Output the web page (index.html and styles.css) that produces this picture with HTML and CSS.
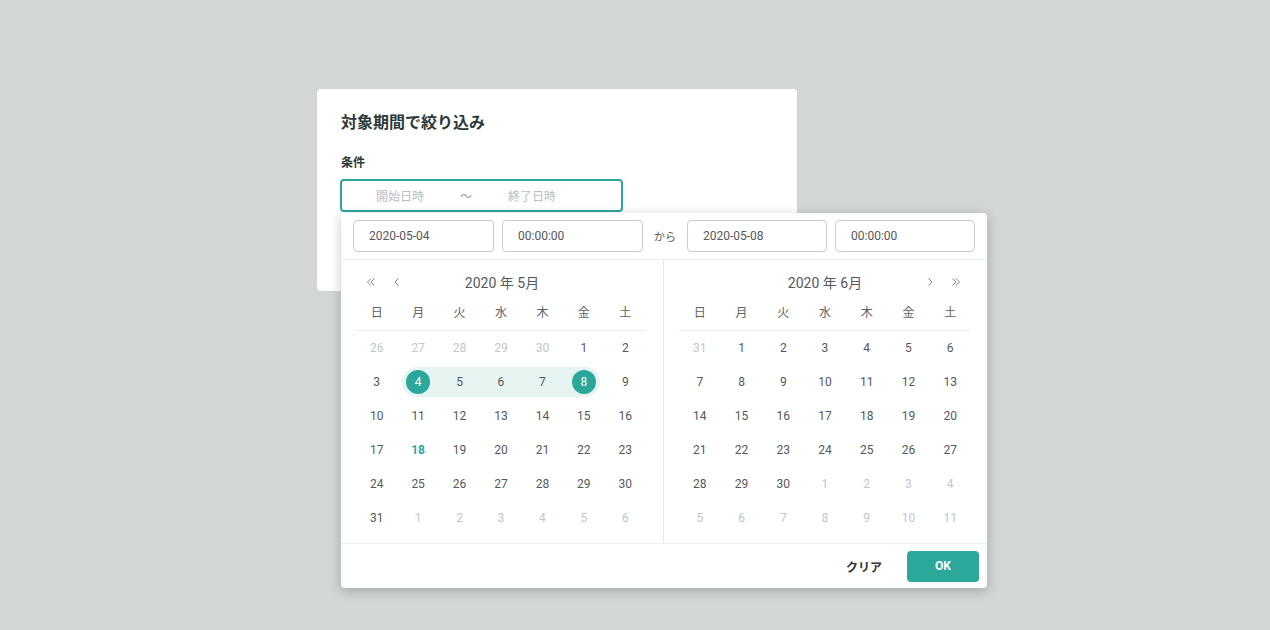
FILE: index.html
```html
<!DOCTYPE html>
<html lang="ja">
<head>
<meta charset="utf-8">
<link rel="stylesheet" href="styles.css">
</head>
<body>
<div class="dialog">
  <h2 class="title">対象期間で絞り込み</h2>
  <div class="label">条件</div>
  <div class="range-input">
    <span class="ph">開始日時</span>
    <span class="sep">〜</span>
    <span class="ph">終了日時</span>
  </div>

  <div class="picker">
    <div class="picker-head">
      <div class="field f-date">2020-05-04</div>
      <div class="field f-time">00:00:00</div>
      <div class="kara">から</div>
      <div class="field f-date2">2020-05-08</div>
      <div class="field f-time2">00:00:00</div>
    </div>
    <div class="panels">
      <div class="panel left">
        <div class="cal-head">
          <div class="navs">
            <svg class="ic" width="10" height="10" viewBox="0 0 10 10"><path d="M5 1.5L1.5 5 5 8.5M8.5 1.5L5 5 8.5 8.5" fill="none" stroke="#7d8086" stroke-width="1"/></svg>
            <svg class="ic ic2" width="10" height="10" viewBox="0 0 10 10"><path d="M6.5 1.5L3 5 6.5 8.5" fill="none" stroke="#7d8086" stroke-width="1"/></svg>
          </div>
          <div class="cal-title">2020 年 5月</div>
          <div class="navs"></div>
        </div>
        <div class="week"><span>日</span><span>月</span><span>火</span><span>水</span><span>木</span><span>金</span><span>土</span></div>
        <div class="days">
          <div class="d g"><span>26</span></div><div class="d g"><span>27</span></div><div class="d g"><span>28</span></div><div class="d g"><span>29</span></div><div class="d g"><span>30</span></div><div class="d"><span>1</span></div><div class="d"><span>2</span></div>
          <div class="d"><span>3</span></div><div class="d in start sel"><span>4</span></div><div class="d in"><span>5</span></div><div class="d in"><span>6</span></div><div class="d in"><span>7</span></div><div class="d in end sel"><span>8</span></div><div class="d"><span>9</span></div>
          <div class="d"><span>10</span></div><div class="d"><span>11</span></div><div class="d"><span>12</span></div><div class="d"><span>13</span></div><div class="d"><span>14</span></div><div class="d"><span>15</span></div><div class="d"><span>16</span></div>
          <div class="d"><span>17</span></div><div class="d today"><span>18</span></div><div class="d"><span>19</span></div><div class="d"><span>20</span></div><div class="d"><span>21</span></div><div class="d"><span>22</span></div><div class="d"><span>23</span></div>
          <div class="d"><span>24</span></div><div class="d"><span>25</span></div><div class="d"><span>26</span></div><div class="d"><span>27</span></div><div class="d"><span>28</span></div><div class="d"><span>29</span></div><div class="d"><span>30</span></div>
          <div class="d"><span>31</span></div><div class="d g"><span>1</span></div><div class="d g"><span>2</span></div><div class="d g"><span>3</span></div><div class="d g"><span>4</span></div><div class="d g"><span>5</span></div><div class="d g"><span>6</span></div>
        </div>
      </div>
      <div class="panel right">
        <div class="cal-head">
          <div class="navs"></div>
          <div class="cal-title">2020 年 6月</div>
          <div class="navs navs-r">
            <svg class="ic ic2" width="10" height="10" viewBox="0 0 10 10"><path d="M3.5 1.5L7 5 3.5 8.5" fill="none" stroke="#7d8086" stroke-width="1"/></svg>
            <svg class="ic" width="10" height="10" viewBox="0 0 10 10"><path d="M1.5 1.5L5 5 1.5 8.5M5 1.5L8.5 5 5 8.5" fill="none" stroke="#7d8086" stroke-width="1"/></svg>
          </div>
        </div>
        <div class="week"><span>日</span><span>月</span><span>火</span><span>水</span><span>木</span><span>金</span><span>土</span></div>
        <div class="days">
          <div class="d g"><span>31</span></div><div class="d"><span>1</span></div><div class="d"><span>2</span></div><div class="d"><span>3</span></div><div class="d"><span>4</span></div><div class="d"><span>5</span></div><div class="d"><span>6</span></div>
          <div class="d"><span>7</span></div><div class="d"><span>8</span></div><div class="d"><span>9</span></div><div class="d"><span>10</span></div><div class="d"><span>11</span></div><div class="d"><span>12</span></div><div class="d"><span>13</span></div>
          <div class="d"><span>14</span></div><div class="d"><span>15</span></div><div class="d"><span>16</span></div><div class="d"><span>17</span></div><div class="d"><span>18</span></div><div class="d"><span>19</span></div><div class="d"><span>20</span></div>
          <div class="d"><span>21</span></div><div class="d"><span>22</span></div><div class="d"><span>23</span></div><div class="d"><span>24</span></div><div class="d"><span>25</span></div><div class="d"><span>26</span></div><div class="d"><span>27</span></div>
          <div class="d"><span>28</span></div><div class="d"><span>29</span></div><div class="d"><span>30</span></div><div class="d g"><span>1</span></div><div class="d g"><span>2</span></div><div class="d g"><span>3</span></div><div class="d g"><span>4</span></div>
          <div class="d g"><span>5</span></div><div class="d g"><span>6</span></div><div class="d g"><span>7</span></div><div class="d g"><span>8</span></div><div class="d g"><span>9</span></div><div class="d g"><span>10</span></div><div class="d g"><span>11</span></div>
        </div>
      </div>
    </div>
    <div class="picker-foot">
      <button class="btn-clear">クリア</button>
      <button class="btn-ok">OK</button>
    </div>
  </div>
</div>
</body>
</html>
```

FILE: styles.css
```css
* { box-sizing: border-box; }
html, body { margin: 0; padding: 0; }
body {
  background: #d2d6d7;
  width: 1270px;
  height: 630px;
  overflow: hidden;
  padding: 89px 0 0 317px;
  font-family: Roboto, "Noto Sans CJK JP", sans-serif;
  color: #606266;
}
.dialog {
  position: relative;
  width: 480px;
  height: 202px;
  background: #fff;
  border-radius: 4px;
  padding: 22px 24px 0;
}
.title {
  margin: 0;
  font-size: 16px;
  line-height: 24px;
  font-weight: 700;
  color: #2d3a3a;
}
.label {
  margin-top: 19px;
  font-size: 12px;
  line-height: 18px;
  font-weight: 700;
  color: #2d3a3a;
}
.range-input {
  margin-top: 7px;
  margin-left: -1px;
  width: 283px;
  height: 33px;
  border: 2px solid #2ba89b;
  border-radius: 4px;
  display: flex;
  align-items: center;
  gap: 36px;
  padding-left: 34px;
  padding-bottom: 1px;
  font-size: 12px;
  color: #b9bcc2;
}
.sep { color: #9b9ea4; }

.picker {
  position: absolute;
  left: 24px;
  top: 124px;
  width: 646px;
  background: #fff;
  border-radius: 4px;
  box-shadow: 0 3px 12px rgba(0, 0, 0, 0.22);
  z-index: 2;
}
.picker-head {
  display: flex;
  align-items: center;
  padding: 0 12px;
  border-bottom: 1px solid #ebeef2;
  height: 47px;
}
.field {
  height: 32px;
  border: 1px solid #c9ccd1;
  border-radius: 4px;
  font-size: 12px;
  line-height: 30px;
  padding-left: 15px;
  color: #55585e;
}
.f-date, .f-time { width: 141px; }
.f-date2, .f-time2 { width: 140px; }
.f-date { margin-right: 8px; }
.f-date2 { margin-right: 8px; }
.kara {
  width: 44px;
  text-align: center;
  font-size: 11px;
  color: #55585e;
}
.panels { display: flex; }
.panel {
  padding: 7px 0 8px 15px;
}
.panel.left { width: 323px; border-right: 1px solid #e6e8eb; }
.panel.right { width: 323px; }
.cal-head {
  height: 30px;
  width: 292px;
  display: flex;
  align-items: center;
  justify-content: space-between;
}
.left .cal-head { width: 292px; }
.navs { width: 60px; display: flex; align-items: center; gap: 16px; padding-left: 10px; }
.navs-r { justify-content: flex-end; padding-left: 0; padding-right: 10px; }
.ic { display: block; }
.cal-title { font-size: 14px; color: #55585e; }
.week {
  display: grid;
  grid-template-columns: repeat(7, 1fr);
  height: 34px;
  align-items: center;
  padding-bottom: 5px;
  border-bottom: 1px solid #ebeef2;
  font-size: 12px;
  text-align: center;
  color: #606266;
}
.days {
  display: grid;
  grid-template-columns: repeat(7, 1fr);
  grid-auto-rows: 34px;
  font-size: 12px;
  color: #55585e;
}
.left .week, .left .days { width: 290px; }
.right .week, .right .days { width: 292px; }
.d {
  position: relative;
  display: flex;
  align-items: center;
  justify-content: center;
}
.d span {
  position: relative;
  z-index: 1;
  width: 24px;
  height: 24px;
  line-height: 24px;
  text-align: center;
  border-radius: 50%;
}
.d.g { color: #c2c5cb; }
.d.today { color: #2ba89b; font-weight: 700; }
.d.in::before {
  content: "";
  position: absolute;
  left: 0;
  right: 0;
  top: 2px;
  bottom: 2px;
  background: #e6f4f2;
}
.d.start::before { left: 4.7px; border-radius: 15px 0 0 15px; }
.d.end::before { right: 4.7px; border-radius: 0 15px 15px 0; }
.d.sel span { background: #2ba89b; color: #fff; }

.picker-foot {
  border-top: 1px solid #ebeef2;
  height: 45px;
  display: flex;
  align-items: center;
  justify-content: flex-end;
  padding: 0 8px 0 0;
}
.btn-clear, .btn-ok {
  font-family: Roboto, "Noto Sans CJK JP", sans-serif;
  font-size: 12px;
  font-weight: 700;
  border: none;
  cursor: pointer;
}
.btn-clear {
  background: none;
  width: 72px;
  height: 31px;
  margin-right: 7px;
  color: #2f3333;
}
.btn-ok {
  width: 72px;
  height: 31px;
  border-radius: 4px;
  background: #2ba89b;
  color: #fff;
}
```
